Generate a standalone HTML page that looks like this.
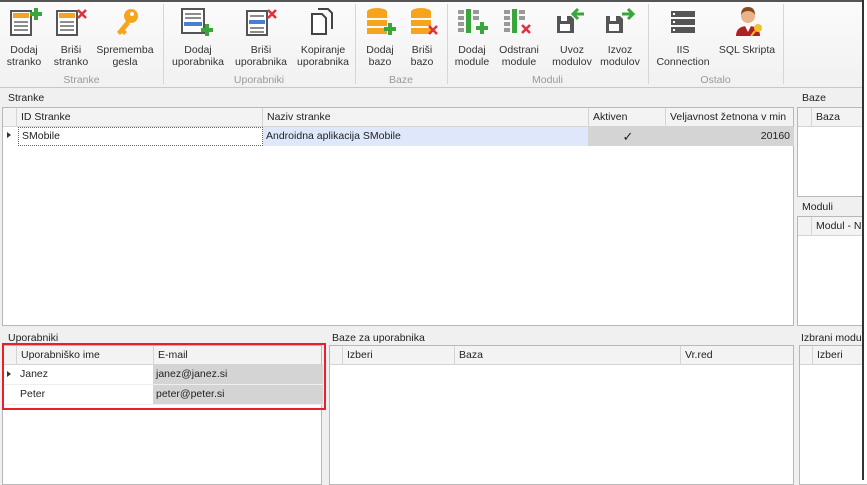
<!DOCTYPE html>
<html><head><meta charset="utf-8">
<style>
*{box-sizing:border-box;margin:0;padding:0}
body{width:867px;height:480px;overflow:hidden;background:#f0f0f0;font-family:"Liberation Sans",sans-serif;font-size:10.5px;color:#222;position:relative}
.abs{position:absolute}
.rib{left:0;top:0;width:867px;height:88px;background:linear-gradient(#fbfbfb,#f1f1f1);border-top:2px solid #555;border-bottom:1px solid #c8c8c8}
.sep{top:4px;width:1px;height:80px;background:#d6d6d6}
.btn{top:44px;text-align:center;line-height:12px;font-size:10.5px;color:#333}
.grp{top:74px;text-align:center;color:#999;font-size:10.5px}
.ico{top:6px}
.lbl{font-size:10.5px;color:#222}
.grid{background:#fff;border:1px solid #b8b8b8}
.hdr{background:#f3f3f3;border-bottom:1px solid #d5d5d5;height:19px}
.hc{position:absolute;top:0;height:19px;line-height:18px;padding-left:4px;border-left:1px solid #d5d5d5;white-space:nowrap;overflow:hidden}
.cell{position:absolute;height:19px;line-height:19px;padding-left:3px}
</style></head><body>
<div class="abs rib"></div>
<svg class="abs ico" style="left:9px" width="34" height="32" viewBox="0 0 34 32"><rect x="2" y="5" width="20" height="24" fill="#fff" stroke="#555" stroke-width="2"/><rect x="4" y="7" width="16" height="5" fill="#f7a41d"/><g stroke="#666" stroke-width="1.5"><line x1="5" y1="16" x2="19" y2="16"/><line x1="5" y1="20" x2="19" y2="20"/><line x1="5" y1="24" x2="19" y2="24"/></g><path d="M27 2v12M21 8h12" stroke="#3aa53a" stroke-width="4"/></svg>
<svg class="abs ico" style="left:55px" width="34" height="32" viewBox="0 0 34 32"><rect x="2" y="5" width="20" height="24" fill="#fff" stroke="#555" stroke-width="2"/><rect x="4" y="7" width="16" height="5" fill="#f7a41d"/><g stroke="#666" stroke-width="1.5"><line x1="5" y1="16" x2="19" y2="16"/><line x1="5" y1="20" x2="19" y2="20"/><line x1="5" y1="24" x2="19" y2="24"/></g><path d="M23 4l8 8M31 4l-8 8" stroke="#e03040" stroke-width="2.5"/></svg>
<svg class="abs ico" style="left:113px" width="28" height="32" viewBox="0 0 28 32"><circle cx="18" cy="10" r="7" fill="#f7a41d"/><circle cx="19" cy="8" r="2" fill="#fff"/><path d="M14 14L4 26l3 3 2-2 2 2 3-3-2-2 5-6" fill="#f7a41d"/></svg>
<svg class="abs ico" style="left:180px" width="34" height="32" viewBox="0 0 34 32"><rect x="2" y="3" width="22" height="24" fill="#fff" stroke="#555" stroke-width="2"/><g stroke="#666" stroke-width="1.5"><line x1="5" y1="8" x2="21" y2="8"/><line x1="5" y1="12" x2="21" y2="12"/></g><rect x="4" y="16" width="18" height="4" fill="#4a7fd0"/><path d="M27 18v12M21 24h12" stroke="#3aa53a" stroke-width="4"/></svg>
<svg class="abs ico" style="left:245px" width="34" height="32" viewBox="0 0 34 32"><rect x="2" y="5" width="20" height="24" fill="#fff" stroke="#555" stroke-width="2"/><g stroke="#666" stroke-width="1.5"><line x1="5" y1="10" x2="19" y2="10"/><line x1="5" y1="22" x2="19" y2="22"/><line x1="5" y1="26" x2="19" y2="26"/></g><rect x="4" y="14" width="16" height="4" fill="#4a7fd0"/><path d="M23 4l8 8M31 4l-8 8" stroke="#e03040" stroke-width="2.5"/></svg>
<svg class="abs ico" style="left:308px" width="28" height="32" viewBox="0 0 28 32"><path d="M4 8h10l4 4v16H4z" fill="#fff" stroke="#444" stroke-width="2"/><path d="M10 3h10l4 4v16" fill="none" stroke="#444" stroke-width="2"/></svg>
<svg class="abs ico" style="left:365px" width="32" height="32" viewBox="0 0 32 32"><g fill="#f7a41d"><ellipse cx="12" cy="6" rx="10" ry="4"/><rect x="2" y="6" width="20" height="6"/><rect x="2" y="14" width="20" height="6"/><rect x="2" y="22" width="20" height="6"/></g><path d="M25 17v12M19 23h12" stroke="#3aa53a" stroke-width="4"/></svg>
<svg class="abs ico" style="left:409px" width="32" height="32" viewBox="0 0 32 32"><g fill="#f7a41d"><ellipse cx="12" cy="6" rx="10" ry="4"/><rect x="2" y="6" width="20" height="6"/><rect x="2" y="14" width="20" height="6"/><rect x="2" y="22" width="20" height="6"/></g><path d="M20 20l8 8M28 20l-8 8" stroke="#e03040" stroke-width="2.5"/></svg>
<svg class="abs ico" style="left:456px" width="34" height="32" viewBox="0 0 34 32"><g fill="#999"><rect x="2" y="4" width="6" height="4"/><rect x="2" y="10" width="6" height="4"/><rect x="2" y="16" width="6" height="4"/><rect x="2" y="22" width="6" height="4"/><rect x="17" y="4" width="6" height="4"/><rect x="17" y="10" width="6" height="4"/></g><rect x="10" y="3" width="5" height="24" fill="#3aa53a"/><path d="M26 16v12M20 22h12" stroke="#3aa53a" stroke-width="4"/></svg>
<svg class="abs ico" style="left:502px" width="34" height="32" viewBox="0 0 34 32"><g fill="#999"><rect x="2" y="4" width="6" height="4"/><rect x="2" y="10" width="6" height="4"/><rect x="2" y="16" width="6" height="4"/><rect x="2" y="22" width="6" height="4"/><rect x="17" y="4" width="6" height="4"/><rect x="17" y="10" width="6" height="4"/></g><rect x="10" y="3" width="5" height="24" fill="#3aa53a"/><path d="M20 19l8 8M28 19l-8 8" stroke="#e03040" stroke-width="2.5"/></svg>
<svg class="abs ico" style="left:554px" width="34" height="32" viewBox="0 0 34 32"><path d="M3 10h14l3 3v14H3z" fill="#555"/><rect x="6" y="18" width="10" height="7" fill="#fff"/><rect x="7" y="10" width="6" height="5" fill="#fff"/><path d="M30 8H20M24 3l-5 5 5 5" fill="none" stroke="#3aa53a" stroke-width="3"/></svg>
<svg class="abs ico" style="left:603px" width="34" height="32" viewBox="0 0 34 32"><path d="M3 10h14l3 3v14H3z" fill="#555"/><rect x="6" y="18" width="10" height="7" fill="#fff"/><rect x="7" y="10" width="6" height="5" fill="#fff"/><path d="M19 8h10M25 3l5 5-5 5" fill="none" stroke="#3aa53a" stroke-width="3"/></svg>
<svg class="abs ico" style="left:669px" width="30" height="32" viewBox="0 0 30 32"><g fill="#555"><rect x="2" y="5" width="24" height="6"/><rect x="2" y="13" width="24" height="6"/><rect x="2" y="21" width="24" height="6"/></g><g fill="#fff"><rect x="4" y="7" width="2" height="2"/><rect x="4" y="15" width="2" height="2"/><rect x="4" y="23" width="2" height="2"/></g></svg>
<svg class="abs ico" style="left:733px" width="34" height="32" viewBox="0 0 34 32"><circle cx="15" cy="10" r="7" fill="#e8b48a"/><path d="M8 9q0-8 7-8t7 8q-2-4-7-4t-7 4" fill="#8a4a1a"/><path d="M3 30q0-10 12-10t12 10z" fill="#b02020"/><path d="M12 20l3 6 3-6" fill="#fff"/><circle cx="25" cy="22" r="4" fill="#f0c030"/><path d="M22 25l-4 5" stroke="#f0c030" stroke-width="2"/></svg>
<div class="abs btn" style="left:3px;width:42px">Dodaj<br>stranko</div>
<div class="abs btn" style="left:50px;width:42px">Briši<br>stranko</div>
<div class="abs btn" style="left:96px;width:58px">Sprememba<br>gesla</div>
<div class="abs btn" style="left:168px;width:60px">Dodaj<br>uporabnika</div>
<div class="abs btn" style="left:231px;width:60px">Briši<br>uporabnika</div>
<div class="abs btn" style="left:294px;width:58px">Kopiranje<br>uporabnika</div>
<div class="abs btn" style="left:360px;width:40px">Dodaj<br>bazo</div>
<div class="abs btn" style="left:404px;width:36px">Briši<br>bazo</div>
<div class="abs btn" style="left:452px;width:40px">Dodaj<br>module</div>
<div class="abs btn" style="left:497px;width:44px">Odstrani<br>module</div>
<div class="abs btn" style="left:550px;width:44px">Uvoz<br>modulov</div>
<div class="abs btn" style="left:598px;width:44px">Izvoz<br>modulov</div>
<div class="abs btn" style="left:655px;width:56px">IIS<br>Connection</div>
<div class="abs btn" style="left:716px;width:62px">SQL Skripta</div>
<div class="abs grp" style="left:0;width:163px">Stranke</div>
<div class="abs grp" style="left:163px;width:192px">Uporabniki</div>
<div class="abs grp" style="left:355px;width:92px">Baze</div>
<div class="abs grp" style="left:447px;width:201px">Moduli</div>
<div class="abs grp" style="left:648px;width:135px">Ostalo</div>
<div class="abs sep" style="left:163px"></div><div class="abs sep" style="left:355px"></div><div class="abs sep" style="left:447px"></div><div class="abs sep" style="left:648px"></div><div class="abs sep" style="left:783px"></div>
<div class="abs lbl" style="left:8px;top:92px">Stranke</div>
<div class="abs grid" style="left:2px;top:107px;width:792px;height:219px">
 <div class="hdr" style="position:relative">
  <div class="hc" style="left:13px;width:247px">ID Stranke</div>
  <div class="hc" style="left:259px;width:326px">Naziv stranke</div>
  <div class="hc" style="left:585px;width:77px">Aktiven</div>
  <div class="hc" style="left:662px;width:129px">Veljavnost žetnona v min</div>
 </div>
 <div class="abs" style="left:4px;top:24px;width:0;height:0;border-left:4px solid #333;border-top:3px solid transparent;border-bottom:3px solid transparent"></div>
 <div class="cell" style="left:15px;top:19px;width:245px;border:1px dotted #666;height:19px;line-height:17px">SMobile</div>
 <div class="cell" style="left:260px;top:19px;width:325px;background:#dfe8fb">Androidna aplikacija SMobile</div>
 <div class="cell" style="left:585px;top:19px;width:77px;background:#d4d4d4;text-align:center;font-size:13px">✓</div>
 <div class="cell" style="left:662px;top:19px;width:129px;background:#d4d4d4;text-align:right;padding-right:4px">20160</div>
</div>
<div class="abs lbl" style="left:802px;top:92px">Baze</div>
<div class="abs grid" style="left:797px;top:107px;width:75px;height:90px"><div class="hdr" style="position:relative"><div class="hc" style="left:13px;width:70px">Baza</div></div></div>
<div class="abs lbl" style="left:802px;top:201px">Moduli</div>
<div class="abs grid" style="left:797px;top:216px;width:75px;height:110px"><div class="hdr" style="position:relative"><div class="hc" style="left:13px;width:70px">Modul - Na</div></div></div>
<div class="abs lbl" style="left:8px;top:332px">Uporabniki</div>
<div class="abs grid" style="left:2px;top:345px;width:320px;height:140px">
 <div class="hdr" style="position:relative">
  <div class="hc" style="left:13px;width:137px">Uporabniško ime</div>
  <div class="hc" style="left:150px;width:170px">E-mail</div>
 </div>
 <div class="abs" style="left:4px;top:25px;border-left:4px solid #333;border-top:3px solid transparent;border-bottom:3px solid transparent"></div>
 <div class="cell" style="left:14px;top:19px;width:136px">Janez</div>
 <div class="cell" style="left:150px;top:19px;width:170px;background:#d4d4d4">janez@janez.si</div>
 <div class="cell" style="left:14px;top:39px;width:136px">Peter</div>
 <div class="cell" style="left:150px;top:39px;width:170px;background:#d4d4d4">peter@peter.si</div>
 <div class="abs" style="left:0;top:38px;width:320px;height:1px;background:#eee"></div>
 <div class="abs" style="left:0;top:58px;width:320px;height:1px;background:#eee"></div>
</div>
<div class="abs" style="left:2px;top:343px;width:324px;height:67px;border:2px solid #e8202a"></div>
<div class="abs lbl" style="left:332px;top:332px">Baze za uporabnika</div>
<div class="abs grid" style="left:329px;top:345px;width:465px;height:140px">
 <div class="hdr" style="position:relative">
  <div class="hc" style="left:12px;width:112px">Izberi</div>
  <div class="hc" style="left:124px;width:226px">Baza</div>
  <div class="hc" style="left:350px;width:115px">Vr.red</div>
 </div>
</div>
<div class="abs lbl" style="left:801px;top:332px;width:62px;overflow:hidden;white-space:nowrap">Izbrani moduli</div>
<div class="abs grid" style="left:799px;top:345px;width:75px;height:140px"><div class="hdr" style="position:relative"><div class="hc" style="left:12px;width:70px">Izberi</div></div></div>
<div class="abs" style="left:862px;top:0;width:2px;height:480px;background:#333"></div>
<div class="abs" style="left:864px;top:0;width:3px;height:480px;background:#fff"></div>
</body></html>
